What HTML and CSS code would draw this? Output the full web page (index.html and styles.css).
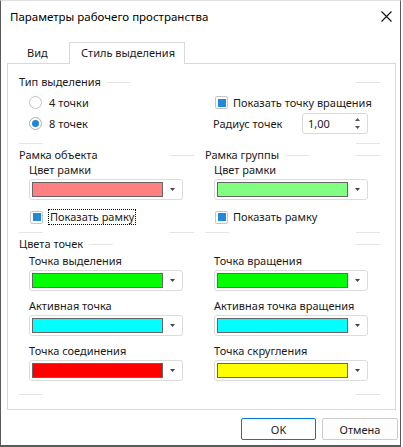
FILE: index.html
```html
<!DOCTYPE html>
<html lang="ru">
<head>
<meta charset="utf-8">
<title>Параметры рабочего пространства</title>
<link rel="stylesheet" href="styles.css">
</head>
<body>
<div class="window">
  <div class="titlebar">
    <span class="title">Параметры рабочего пространства</span>
    <svg class="close" width="11" height="11" viewBox="0 0 11 11"><path d="M0.5 0.5 L10.5 10.5 M10.5 0.5 L0.5 10.5" stroke="#111" stroke-width="1.1" fill="none"/></svg>
  </div>
  <div class="tabs">
    <div class="tab">Вид</div>
    <div class="tab active">Стиль выделения</div>
  </div>
  <div class="panel">
    <div class="group">
      <div class="ghead"><span class="gtitle">Тип выделения</span><i class="seg after"></i><span class="fill"></span><i class="seg"></i></div>
      <div class="g1body">
        <div class="row"><span class="radio"></span><span>4 точки</span></div>
        <div class="row"><span class="check on r"></span><span>Показать точку вращения</span></div>
        <div class="row"><span class="radio on"></span><span>8 точек</span></div>
        <div class="row"><span>Радиус точек</span>
          <div class="spin"><span>1,00</span>
            <svg width="5" height="11" viewBox="0 0 5 11"><polygon points="0,3 5,3 2.5,0" fill="#555"/><polygon points="0,8 5,8 2.5,11" fill="#555"/></svg>
          </div>
        </div>
      </div>
      <div class="gfoot"><i class="seg"></i><span class="fill"></span><i class="seg"></i></div>
    </div>

    <div class="pair">
      <div class="group half">
        <div class="ghead"><span class="gtitle">Рамка объекта</span><span class="fill"></span><i class="seg"></i></div>
        <div class="gbody">
          <div class="lbl">Цвет рамки</div>
          <div class="combo"><span class="swatch c-pink"></span><svg class="arr" width="5" height="3" viewBox="0 0 5 3"><polygon points="0,0 5,0 2.5,3" fill="#444"/></svg></div>
          <div class="cbrow"><span class="check on"></span><span class="cbtext focus">Показать рамку</span></div>
        </div>
        <div class="gfoot"><i class="seg"></i><span class="fill"></span><i class="seg"></i></div>
      </div>
      <div class="group half">
        <div class="ghead"><span class="gtitle">Рамка группы</span><i class="seg after"></i><span class="fill"></span><i class="seg"></i></div>
        <div class="gbody right">
          <div class="lbl">Цвет рамки</div>
          <div class="combo"><span class="swatch c-lgreen"></span><svg class="arr" width="5" height="3" viewBox="0 0 5 3"><polygon points="0,0 5,0 2.5,3" fill="#444"/></svg></div>
          <div class="cbrow"><span class="check on"></span><span class="cbtext plain">Показать рамку</span></div>
        </div>
        <div class="gfoot"><i class="seg"></i><span class="fill"></span><i class="seg"></i></div>
      </div>
    </div>

    <div class="group g3">
      <div class="ghead"><span class="gtitle">Цвета точек</span><i class="seg after"></i><span class="fill"></span><i class="seg"></i></div>
      <div class="g3body">
        <div class="col">
          <div class="lbl">Точка выделения</div>
          <div class="combo"><span class="swatch c-green"></span><svg class="arr" width="5" height="3" viewBox="0 0 5 3"><polygon points="0,0 5,0 2.5,3" fill="#444"/></svg></div>
          <div class="lbl next">Активная точка</div>
          <div class="combo"><span class="swatch c-cyan"></span><svg class="arr" width="5" height="3" viewBox="0 0 5 3"><polygon points="0,0 5,0 2.5,3" fill="#444"/></svg></div>
          <div class="lbl next">Точка соединения</div>
          <div class="combo"><span class="swatch c-red"></span><svg class="arr" width="5" height="3" viewBox="0 0 5 3"><polygon points="0,0 5,0 2.5,3" fill="#444"/></svg></div>
        </div>
        <div class="col">
          <div class="lbl">Точка вращения</div>
          <div class="combo"><span class="swatch c-green"></span><svg class="arr" width="5" height="3" viewBox="0 0 5 3"><polygon points="0,0 5,0 2.5,3" fill="#444"/></svg></div>
          <div class="lbl next">Активная точка вращения</div>
          <div class="combo"><span class="swatch c-cyan"></span><svg class="arr" width="5" height="3" viewBox="0 0 5 3"><polygon points="0,0 5,0 2.5,3" fill="#444"/></svg></div>
          <div class="lbl next">Точка скругления</div>
          <div class="combo"><span class="swatch c-yellow"></span><svg class="arr" width="5" height="3" viewBox="0 0 5 3"><polygon points="0,0 5,0 2.5,3" fill="#444"/></svg></div>
        </div>
      </div>
      <div class="gfoot"><i class="seg"></i><span class="fill"></span><i class="seg"></i></div>
    </div>
  </div>
  <div class="buttons">
    <button class="btn primary">OK</button>
    <button class="btn">Отмена</button>
  </div>
</div>
</body>
</html>
```

FILE: styles.css
```css
html, body {
  margin: 0;
  padding: 0;
  background: #ffffff;
}

body {
  font-family: "Noto Sans", "Open Sans", sans-serif;
  font-size: 11px;
  color: #1a1a1a;
}

.window {
  width: 401px;
  height: 447px;
  box-sizing: border-box;
  border: 1px solid #5a5a5a;
  border-top-color: #e0e0e0;
  border-bottom-width: 2px;
  background: #ffffff;
  display: flex;
  flex-direction: column;
}

.titlebar {
  height: 31px;
  display: flex;
  align-items: center;
  justify-content: space-between;
  padding: 0 8px 0 9px;
}

.title {
  font-size: 11.5px;
  color: #000;
  white-space: nowrap;
}

.close {
  display: block;
}

.tabs {
  display: flex;
  height: 21px;
  margin: 10px 0 0 6px;
}

.tab {
  width: 62px;
  box-sizing: border-box;
  padding-left: 20px;
  line-height: 21px;
  white-space: nowrap;
}

.tab.active {
  width: 116px;
  height: 22px;
  padding-left: 11px;
  border: 1px solid #d9d9d9;
  border-bottom: none;
  line-height: 20px;
  background: #ffffff;
  position: relative;
  z-index: 1;
}

.panel {
  width: 389px;
  height: 347px;
  margin-left: 6px;
  box-sizing: border-box;
  border: 1px solid #d9d9d9;
  padding: 11px 15px 0 11px;
}

.ghead {
  display: flex;
  align-items: center;
  height: 14px;
}

.gtitle {
  line-height: 14px;
  white-space: nowrap;
}

.seg {
  display: block;
  width: 24px;
  height: 1px;
  background: #e4e4e4;
  flex: none;
}

.seg.after {
  margin-left: 6px;
}

.fill {
  flex: 1;
}

.gfoot {
  display: flex;
  height: 1px;
}

.g1body {
  display: grid;
  grid-template-columns: 184px 1fr;
  grid-auto-rows: 21px;
  padding-left: 10px;
  margin: 3px 0 9px;
}

.row {
  display: flex;
  align-items: center;
  white-space: nowrap;
}

.radio {
  width: 13px;
  height: 13px;
  box-sizing: border-box;
  border: 1px solid #c2c2c2;
  border-radius: 50%;
  margin-right: 7px;
  display: flex;
  align-items: center;
  justify-content: center;
  flex: none;
}

.radio.on {
  border-color: #b0b0b0;
}

.radio.on::after {
  content: "";
  width: 7px;
  height: 7px;
  border-radius: 50%;
  background: #1e86d2;
}

.check {
  width: 13px;
  height: 13px;
  box-sizing: border-box;
  border: 1px solid #c6c6c6;
  border-radius: 2px;
  display: flex;
  align-items: center;
  justify-content: center;
  flex: none;
  margin-left: 1px;
  margin-right: 5px;
}

.check.r {
  margin-left: 2px;
}

.check.on::after {
  content: "";
  width: 8px;
  height: 8px;
  background: #2189d6;
}

.spin {
  width: 66px;
  height: 21px;
  box-sizing: border-box;
  border: 1px solid #d9d9d9;
  border-radius: 3px;
  margin-left: auto;
  margin-right: 12px;
  display: flex;
  align-items: center;
  justify-content: space-between;
  padding: 0 7px 0 5px;
}

.spin svg {
  display: block;
}

.pair {
  display: flex;
  gap: 11px;
  margin-top: 4px;
}

.half {
  width: 175px;
}

.gbody {
  padding-left: 10px;
}

.gbody.right {
  padding-left: 9px;
}

.lbl {
  height: 16px;
  line-height: 16px;
  white-space: nowrap;
}

.combo {
  width: 154px;
  height: 21px;
  box-sizing: border-box;
  margin-top: 1px;
  border: 1px solid #dcdcdc;
  border-radius: 3px;
  display: flex;
  align-items: center;
  padding-left: 2px;
  background: #ffffff;
}

.swatch {
  width: 131px;
  height: 15px;
  box-sizing: border-box;
  border: 1px solid #666666;
  flex: none;
}

.arr {
  display: block;
  margin-left: 7px;
}

.c-pink { background: #ff8080; }
.c-lgreen { background: #80ff80; }
.c-green { background: #00ff00; }
.c-cyan { background: #00ffff; }
.c-red { background: #ff0000; }
.c-yellow { background: #ffff00; }

.cbrow {
  display: flex;
  align-items: center;
  height: 20px;
  margin: 7px 0 5px;
}

.cbtext {
  line-height: 14px;
  white-space: nowrap;
}

.cbtext.focus {
  outline: 1px dotted #000;
  margin-left: 1px;
  padding: 0 1px;
}

.g3 {
  margin-top: 4px;
}

.g3body {
  display: grid;
  grid-template-columns: 185px 1fr;
  padding-left: 10px;
  margin: 2px 0 13px;
}

.col {
  display: flex;
  flex-direction: column;
}

.lbl.next {
  margin-top: 7px;
}

.buttons {
  display: flex;
  justify-content: flex-end;
  gap: 6px;
  margin-top: 8px;
  padding-right: 2px;
}

.btn {
  height: 22px;
  width: 76px;
  box-sizing: border-box;
  border: 1px solid #cccccc;
  border-radius: 2px;
  background: #fdfdfd;
  font-family: inherit;
  font-size: 11px;
  color: #1a1a1a;
  padding: 0;
}

.btn.primary {
  width: 75px;
  border-color: #0078d7;
  background: #ffffff;
}
```
